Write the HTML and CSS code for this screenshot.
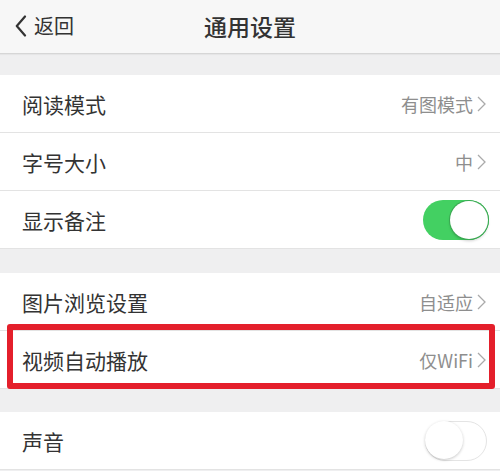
FILE: index.html
```html
<!DOCTYPE html>
<html lang="zh-CN">
<head>
<meta charset="utf-8">
<title>通用设置</title>
<link rel="stylesheet" href="styles.css">
</head>
<body>
<div class="page">
  <header class="nav">
    <div class="back">
      <svg class="back-icon" width="12" height="22" viewBox="0 0 12 22"><polyline points="10,1.5 1.8,11 10,20.5" fill="none" stroke="#333" stroke-width="2.2" stroke-linecap="round" stroke-linejoin="round"/></svg>
      <span>返回</span>
    </div>
    <h1 class="title">通用设置</h1>
    <div></div>
  </header>

  <section class="group first">
    <div class="row">
      <span class="label">阅读模式</span>
      <span class="value">有图模式<svg class="chev" width="9" height="16" viewBox="0 0 9 16"><polyline points="1,1 8,8 1,15" fill="none" stroke="#aaa" stroke-width="1.3"/></svg></span>
    </div>
    <div class="row">
      <span class="label">字号大小</span>
      <span class="value">中<svg class="chev" width="9" height="16" viewBox="0 0 9 16"><polyline points="1,1 8,8 1,15" fill="none" stroke="#aaa" stroke-width="1.3"/></svg></span>
    </div>
    <div class="row">
      <span class="label">显示备注</span>
      <span class="toggle on"><span class="knob"></span></span>
    </div>
  </section>

  <section class="group second">
    <div class="row">
      <span class="label">图片浏览设置</span>
      <span class="value">自适应<svg class="chev" width="9" height="16" viewBox="0 0 9 16"><polyline points="1,1 8,8 1,15" fill="none" stroke="#aaa" stroke-width="1.3"/></svg></span>
    </div>
    <div class="row highlighted">
      <span class="label">视频自动播放</span>
      <span class="value">仅WiFi<svg class="chev" width="9" height="16" viewBox="0 0 9 16"><polyline points="1,1 8,8 1,15" fill="none" stroke="#aaa" stroke-width="1.3"/></svg></span>
      <span class="mark"></span>
    </div>
  </section>

  <section class="group third">
    <div class="row">
      <span class="label">声音</span>
      <span class="toggle off"><span class="knob"></span></span>
    </div>
  </section>
</div>
</body>
</html>
```

FILE: styles.css
```css
html, body {
  margin: 0;
  padding: 0;
}
body {
  background: #efeff0;
  font-family: "Noto Sans CJK SC", "Noto Sans", sans-serif;
  color: #333;
  width: 500px;
  height: 471px;
  overflow: hidden;
}
.page {
  display: flex;
  flex-direction: column;
}
.nav {
  box-sizing: border-box;
  height: 54px;
  background: #f7f7f7;
  border-bottom: 1px solid #d6d6d6;
  box-shadow: 0 1px 1px rgba(0,0,0,0.04);
  display: grid;
  grid-template-columns: 1fr auto 1fr;
  align-items: center;
}
.back {
  display: flex;
  align-items: center;
  padding-left: 15px;
  font-size: 20px;
  color: #333;
  gap: 7px;
  margin-top: -2px;
}
.back-icon {
  display: block;
}
.title {
  margin: 0;
  font-size: 23px;
  font-weight: 500;
  color: #333;
  margin-top: -2px;
}
.group {
  background: #fff;
  display: flex;
  flex-direction: column;
}
.group.first { margin-top: 21px; }
.group.second { margin-top: 24px; }
.group.third { margin-top: 23px; }
.row {
  box-sizing: border-box;
  height: 58px;
  border-bottom: 1px solid #e3e3e3;
  display: flex;
  align-items: center;
  justify-content: space-between;
  padding: 0 14px 0 22px;
  position: relative;
}
.label {
  font-size: 21px;
  color: #333;
}
.value {
  display: flex;
  align-items: center;
  font-size: 18px;
  color: #8e8e8e;
  gap: 4px;
}
.chev { display: block; }
.toggle {
  box-sizing: border-box;
  width: 66px;
  height: 40px;
  border-radius: 20px;
  position: relative;
  margin-right: -3px;
}
.toggle.on {
  background: #43d062;
}
.toggle.on .knob {
  position: absolute;
  right: 1px;
  top: 1px;
  width: 38px;
  height: 38px;
  border-radius: 50%;
  background: #fff;
  box-shadow: 0 0 0 1px #3aa852, 0 2px 3px rgba(0,0,0,0.2);
}
.toggle.off {
  width: 62px;
  border: 1.5px solid #e4e4e4;
  background: #fff;
  margin-right: -1px;
}
.toggle.off .knob {
  position: absolute;
  left: -1px;
  top: -1px;
  width: 38px;
  height: 38px;
  border-radius: 50%;
  background: #fff;
  box-shadow: 0 1px 3px rgba(0,0,0,0.22);
}
.mark {
  position: absolute;
  left: 7px;
  right: 5px;
  top: -7px;
  bottom: -1px;
  border: 6px solid #e41f2b;
  border-radius: 3px;
  pointer-events: none;
}
```
